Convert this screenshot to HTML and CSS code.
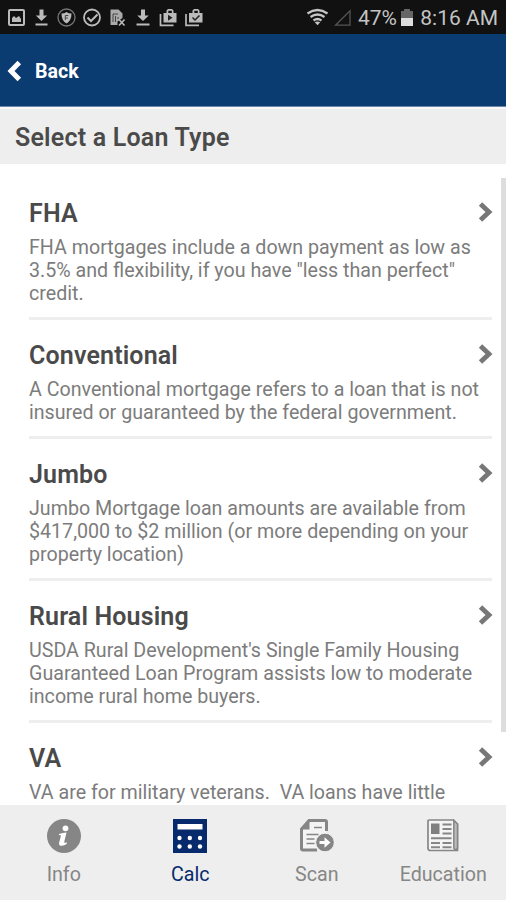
FILE: index.html
```html
<!DOCTYPE html>
<html lang="en">
<head>
    <meta charset="UTF-8">
    <title>Select a Loan Type</title>
    <link rel="stylesheet" href="styles.css">
</head>
<body>

    <div class="status">
        <svg class="status__icons" width="204" height="34" viewBox="0 0 204 34">
            <!-- picture -->
            <rect x="9" y="10" width="15" height="15" rx="1" fill="none" stroke="#bbb" stroke-width="2"/>
            <path d="M12 22v-4l2-2 2 2 3-2 2 3v3z" fill="#bbb"/>
            <!-- download -->
            <path d="M39.5 9.5h4v6h3.7L41.5 21l-5.700-5.500h3.700zM35.500 23.500h12v2h-12z" fill="#bbb"/>
            <!-- shield -->
            <circle cx="66.500" cy="17.500" r="8.500" fill="none" stroke="#777" stroke-width="1.300"/>
            <path d="M61.500 13.500q3 0 5-1.500 2 1.500 5 1.500 0 7-5 10-5-3-5-10z" fill="#bbb"/>
            <path d="M65.300 20v-4.500h3M65.300 18h2.500" fill="none" stroke="#444" stroke-width="1"/>
            <!-- check -->
            <circle cx="92" cy="17.500" r="8" fill="none" stroke="#bbb" stroke-width="1.800"/>
            <path d="M87.500 17.500l3.500 3.500 6.500-6.500" fill="none" stroke="#bbb" stroke-width="2"/>
            <!-- document with cross -->
            <path d="M110.500 9.500h8l4 4V18l-5 3.500V25h-7z" fill="#aaa"/>
            <path d="M113 14v8m0-8h5m-2.500 2v6m2.500-5v2" fill="none" stroke="#444" stroke-width="1"/>
            <path d="M119 19.500l5.500 6m0-6l-5.500 6" stroke="#bbb" stroke-width="1.600"/>
            <!-- download -->
            <path d="M141 9.500h4v6h3.700L143 21l-5.700-5.500h3.700zM136.500 23.500h13v2h-13z" fill="#bbb"/>
            <!-- briefcase with play -->
            <path d="M163.500 13h3v-2.500l1.500-1.500h4l1.500 1.500V13h3v9.500h-13zM168.300 13h3.500v-2.200h-3.500z" fill="#bbb" fill-rule="evenodd"/>
            <path d="M160.500 14v11.300h13" fill="none" stroke="#bbb" stroke-width="1.700"/>
            <path d="M168 14.800l4.500 3-4.500 3z" fill="#222"/>
            <!-- briefcase with check -->
            <path d="M189 13h3.500v-2.500L194 9h4l1.500 1.500V13h3v9.500H189zM194.300 13h3.500v-2.200h-3.500z" fill="#bbb" fill-rule="evenodd"/>
            <path d="M186 14v11.300h13" fill="none" stroke="#bbb" stroke-width="1.700"/>
            <path d="M192.500 17.500l2.500 2.500 4.500-4.500" fill="none" stroke="#222" stroke-width="1.500"/>
        </svg>
        <div class="status__right">
            <svg width="46" height="34" viewBox="306 0 46 34">
                <g fill="none" stroke="#c4c4c4" stroke-width="2.300">
                    <path d="M307.500 13.500q10-7 20 0"/>
                    <path d="M310.500 17q7-5 14 0"/>
                    <path d="M313.500 20.500q4-3 8 0"/>
                </g>
                <path d="M314.800 22.300q2.700-1.800 5.400 0l-2.700 3z" fill="#c4c4c4"/>
                <path d="M335.500 25.200L350 10.800v14.400z" fill="none" stroke="#555" stroke-width="1.300"/>
            </svg>
            <span class="status__battery">47%</span>
            <svg class="status__battery-icon" width="12" height="34" viewBox="0 0 12 34">
                <path d="M0 11h3V9h6v2h3v7H0z" fill="#666"/>
                <path d="M0 18h12v8H0z" fill="#ddd"/>
            </svg>
            <span class="status__time">8:16 AM</span>
        </div>
    </div>

    <header class="header">
        <svg width="15" height="22" viewBox="0 0 15 22">
            <path d="M12.300 2.500L4 11l8.300 8.500" fill="none" stroke="#fff" stroke-width="5"/>
        </svg>
        <span class="header__back">Back</span>
    </header>

    <h1 class="heading">Select a Loan Type</h1>

    <main class="loans">
        <div class="loan">
            <h2 class="loan__title">FHA</h2>
            <p class="loan__text">FHA mortgages include a down payment as low as<br>3.5% and flexibility, if you have "less than perfect"<br>credit.</p>
        </div>
        <div class="loan">
            <h2 class="loan__title">Conventional</h2>
            <p class="loan__text">A Conventional mortgage refers to a loan that is not<br>insured or guaranteed by the federal government.</p>
        </div>
        <div class="loan">
            <h2 class="loan__title">Jumbo</h2>
            <p class="loan__text">Jumbo Mortgage loan amounts are available from<br>$417,000 to $2 million (or more depending on your<br>property location)</p>
        </div>
        <div class="loan">
            <h2 class="loan__title">Rural Housing</h2>
            <p class="loan__text">USDA Rural Development's Single Family Housing<br>Guaranteed Loan Program assists low to moderate<br>income rural home buyers.</p>
        </div>
        <div class="loan">
            <h2 class="loan__title">VA</h2>
            <p class="loan__text">VA are for military veterans.&nbsp; VA loans have little</p>
        </div>
        <div class="loans__scrollbar"></div>
    </main>

    <nav class="tabs">
        <div class="tab">
            <svg width="34" height="34" viewBox="0 0 34 34">
                <circle cx="17" cy="17" r="17" fill="#868686"/>
                <circle cx="18.500" cy="9.300" r="2.900" fill="#fff"/>
                <path d="M12 15q4-1.500 7.500-1.500l-2.300 9.500q-.2 1.500 2.800.3l-.4 1.700q-2.600 2-5.600 1.800-2.500-.3-1.800-3.300l1.600-6.300q.2-1.400-2-1z" fill="#fff"/>
            </svg>
            <span class="tab__label">Info</span>
        </div>
        <div class="tab tab--active">
            <svg width="34" height="34" viewBox="0 0 34 34">
                <path d="M0 0h34v34H0z" fill="#062a6b"/>
                <path d="M4.500 5h25v5.500h-25z" fill="#fff"/>
                <g fill="#fff">
                    <circle cx="6.500" cy="19" r="2.200"/>
                    <circle cx="16.800" cy="19" r="2.200"/>
                    <circle cx="27" cy="19" r="2.200"/>
                    <circle cx="6.500" cy="27.500" r="2.200"/>
                    <circle cx="16.800" cy="27.500" r="2.200"/>
                    <circle cx="27" cy="27.500" r="2.200"/>
                </g>
            </svg>
            <span class="tab__label">Calc</span>
        </div>
        <div class="tab">
            <svg width="34" height="34" viewBox="0 0 34 34">
                <path d="M9 1.500h17.500v28.500q0 1-1 1H3q-1.500 0-1.500-1.500V10z" fill="#f4f4f4"/>
                <path d="M26.500 12V3q0-1.500-1.500-1.500H9L1.500 10v19.500q0 1.500 1.500 1.500h14" fill="none" stroke="#868686" stroke-width="3"/>
                <path d="M9.500 1v9.500H1z" fill="#868686"/>
                <path d="M14 8.500h8M6.500 15.500h12M6.500 20h8M6.500 24.500h8" stroke="#868686" stroke-width="1.700"/>
                <circle cx="25" cy="23.500" r="9.300" fill="#868686" stroke="#eee" stroke-width="1"/>
                <path d="M19.500 22h5v-3.700l6 5.200-6 5.200V25h-5z" fill="#fff"/>
            </svg>
            <span class="tab__label">Scan</span>
        </div>
        <div class="tab">
            <svg width="34" height="34" viewBox="0 0 34 34">
                <path d="M3 1h24.500l4 4v26.500H4.500q-2.500 0-2.500-2.500V2q0-1 1-1z" fill="#f4f4f4" stroke="#868686" stroke-width="1.700"/>
                <path d="M27.800 1.500v27q0 2 1.700 2 2 0 2-2V5z" fill="#bbb" stroke="#868686" stroke-width="1.500"/>
                <path d="M5 4.500h8.500v10.500H5z" fill="#808080"/>
                <path d="M16.500 5.500h9M16.500 10h9M16.500 14.500h9M5 19.300h20.500M5 24h9M16.500 24h9M5 28.300h9M16.500 28.300h9" stroke="#868686" stroke-width="1.900"/>
            </svg>
            <span class="tab__label">Education</span>
        </div>
    </nav>

    <script>
        // every loan row gets the same arrow
        document.querySelectorAll('.loan__title').forEach(title => {
            title.insertAdjacentHTML('beforeend',
                '<svg class="loan__arrow" width="15" height="20" viewBox="0 0 15 20"><path d="M2.500 2L11 10l-8.500 8" fill="none" stroke="#777" stroke-width="4.800"/></svg>');
        });
    </script>
</body>
</html>
```
FILE: styles.css
```css
body {
    background-color: #fff;
    color: #4a4a4a;
    display: flex;
    flex-direction: column;
    font-family: Roboto, sans-serif;
    height: 900px;
    margin: 0;
    overflow: hidden;
}

svg {
    display: block;
    flex: none;
}

.status {
    background-color: #111;
    color: #c4c4c4;
    display: flex;
    flex: none;
    font-size: 21px;
    height: 34px;
    justify-content: space-between;
    line-height: 37px;
}

.status__right {
    display: flex;
    padding-right: 8px;
}

.status__battery {
    margin-left: 6px;
    width: 39px;
}

.status__battery-icon {
    margin-left: 4px;
}

.status__time {
    margin-left: 7px;
    text-align: right;
    white-space: nowrap;
    width: 78px;
}

.header {
    align-items: center;
    background-color: #0b3c71;
    border-bottom: 1px solid #6b86a8;
    box-sizing: border-box;
    color: #fff;
    display: flex;
    flex: none;
    height: 73px;
    padding: 2px 0 0 7px;
}

.header__back {
    font-size: 19.6px;
    font-weight: 700;
    margin-left: 13px;
    padding-top: 1px;
}

.heading {
    background-color: #eee;
    border-top: 2px solid #f8f8f8;
    box-sizing: border-box;
    flex: none;
    font-size: 25px;
    font-weight: 600;
    height: 57px;
    letter-spacing: 0.2px;
    line-height: 57px;
    margin: 0;
    padding-left: 15px;
}

.loans {
    flex: 1;
    min-height: 0;
    overflow: hidden;
    padding: 14px 14px 0 29px;
    position: relative;
}

.loans__scrollbar {
    background-color: #ddd;
    height: 554px;
    position: absolute;
    right: 0;
    top: 14px;
    width: 5px;
}

.loan {
    border-bottom: 3px solid #eee;
    padding: 21px 0 11.8px;
}

.loan__title {
    align-items: center;
    display: flex;
    font-size: 25px;
    font-weight: 600;
    justify-content: space-between;
    letter-spacing: 0.15px;
    line-height: 30px;
    margin: 0 0 7px;
}

.loan__arrow {
    margin: -5px -1px 0 0;
}

.loan__text {
    color: #7c7c7c;
    font-size: 19.65px;
    line-height: 23.1px;
    margin: 0;
    white-space: nowrap;
}

.tabs {
    background-color: #eee;
    display: flex;
    flex: none;
    height: 95px;
}

.tab {
    align-items: center;
    color: #868686;
    display: flex;
    flex: 1 1 0;
    flex-direction: column;
    padding: 14px 0 0 1px;
}

.tab--active {
    color: #062a6b;
}

.tab__label {
    font-size: 19.65px;
    line-height: 24px;
    margin-top: 10px;
}
```
